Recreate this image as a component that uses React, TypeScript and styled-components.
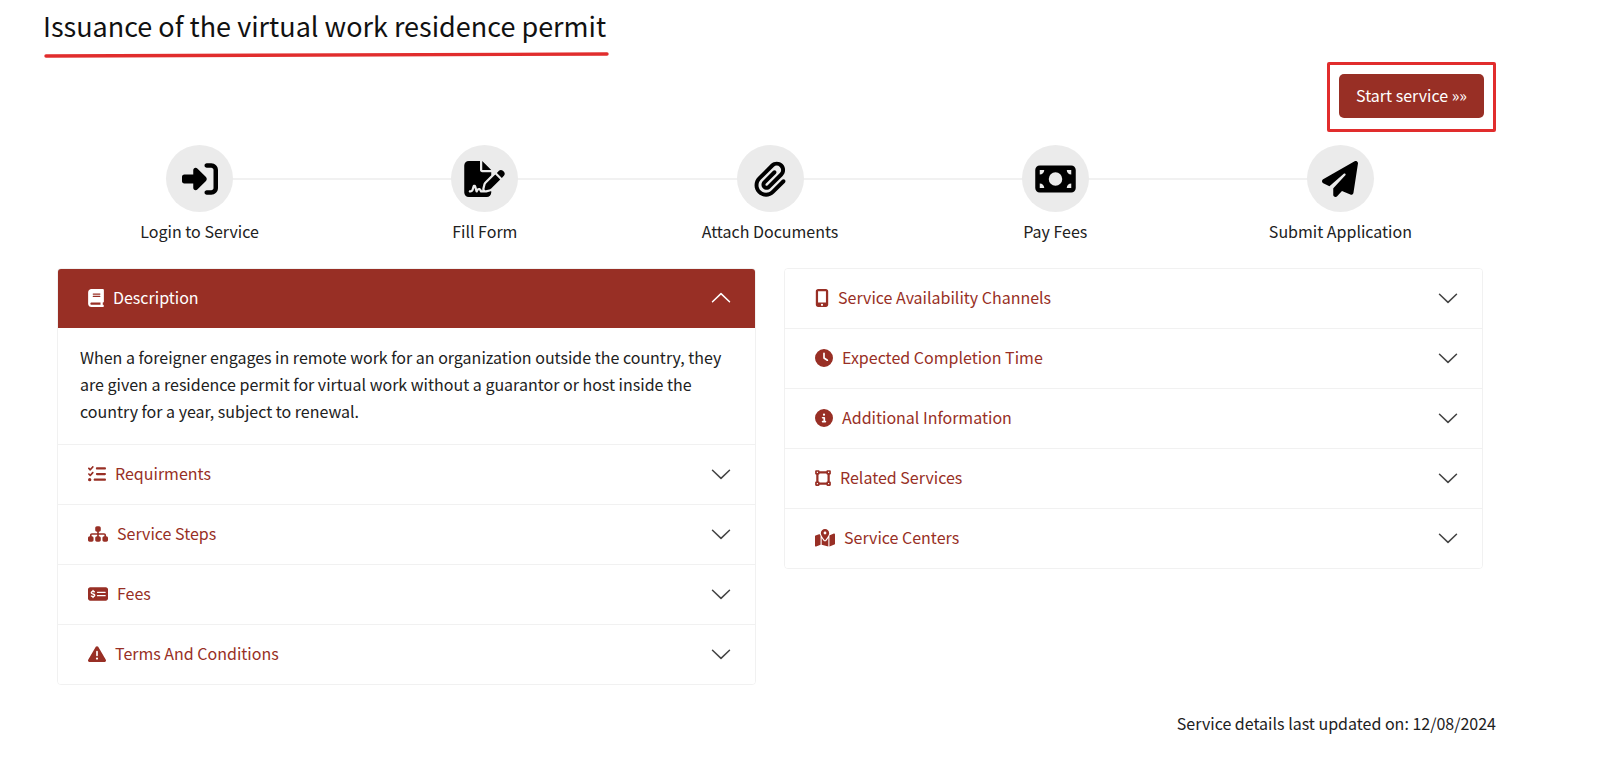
import React, { useState } from 'react';
import styled, { createGlobalStyle } from 'styled-components';
import type { IconType } from 'react-icons';
import {
  FaRightToBracket, FaFileSignature, FaPaperclip, FaMoneyBill, FaPaperPlane, FaBook, FaListCheck,
  FaSitemap, FaMoneyCheckDollar, FaTriangleExclamation, FaMobileScreenButton, FaClock, FaCircleInfo,
  FaVectorSquare, FaMapLocationDot,
} from 'react-icons/fa6';

const brand = '#982f25';
const marker = '#e12d2d';
const line = '#f1f1f1';

const GlobalStyle = createGlobalStyle`
  *, *::before, *::after { box-sizing: border-box; }
  body {
    margin: 0;
    background: #fff;
    color: #212121;
    font: 16px/27px "Noto Sans CJK SC", "Noto Sans", sans-serif;
  }
  button { font: inherit; cursor: pointer; }
`;

const Page = styled.main`
  padding: 6px 104px 16px 43px;
`;

const Title = styled.h1`
  margin: 0;
  font-size: 27px;
  font-weight: 400;
  line-height: 40px;
  color: #111;
`;

const TitleBlock = styled.header`
  width: fit-content;
`;

const Underline = styled.svg`
  display: block;
  width: 100%;
  height: 6px;
  margin-top: 6px;
  overflow: visible;
`;

const Actions = styled.div`
  display: flex;
  justify-content: flex-end;
  margin-top: 4px;
`;

const Highlight = styled.div`
  padding: 9px 9px 11px;
  border: 3px solid ${marker};
  border-radius: 2px;
`;

const StartButton = styled.button`
  display: block;
  height: 44px;
  padding: 0 17px 1px;
  border: 0;
  border-radius: 5px;
  background: ${brand};
  color: #fff;
`;

const Content = styled.div`
  padding: 13px 13px 0 14px;
`;

const Steps = styled.ol`
  display: flex;
  margin: 0;
  padding: 0;
  list-style: none;
`;

const Step = styled.li`
  position: relative;
  flex: 1;
  display: flex;
  flex-direction: column;
  align-items: center;
  gap: 6px;

  &:not(:last-child)::after {
    content: '';
    position: absolute;
    top: 33px;
    left: 50%;
    width: 100%;
    height: 2px;
    background: ${line};
  }
`;

const StepIcon = styled.span`
  position: relative;
  z-index: 1;
  display: grid;
  place-items: center;
  width: 67px;
  height: 67px;
  border-radius: 50%;
  background: #ebebeb;
  color: #000;
`;

const Glyph = styled.span<{ $width: number; $height: number }>`
  display: block;
  flex: none;
  width: ${p => p.$width}px;
  height: ${p => p.$height}px;

  > svg { display: block; width: 100%; height: 100%; }
`;

const Columns = styled.div`
  display: grid;
  grid-template-columns: 1fr 1fr;
  gap: 28px;
  align-items: start;
  margin-top: 23px;
`;

const Accordion = styled.div`
  border: 1px solid ${line};
  border-radius: 4px;
  overflow: hidden;
`;

const Item = styled.section`
  & + & { border-top: 1px solid ${line}; }
`;

const ItemHeading = styled.h2`
  margin: 0;
  font-size: 16px;
  font-weight: 400;
`;

const Toggle = styled.button<{ $open: boolean }>`
  display: flex;
  align-items: center;
  gap: 9px;
  width: 100%;
  height: 59px;
  padding: 0 24px 2px 30px;
  border: 0;
  background: ${p => (p.$open ? brand : '#fff')};
  color: ${p => (p.$open ? '#fff' : brand)};
  text-align: left;
`;

const Chevron = styled.svg<{ $open: boolean }>`
  width: 20px;
  height: 20px;
  margin-left: auto;
  transform: ${p => (p.$open ? 'rotate(180deg)' : 'none')};
  color: ${p => (p.$open ? '#fff' : '#444')};
`;

const Body = styled.p`
  margin: 0;
  padding: 16px 22px 19px;
`;

const Updated = styled.p`
  margin: 25px 0 0;
  text-align: right;
`;

type Entry = { label: string; icon: IconType; width: number; text?: string };

const steps: Entry[] = [
  { label: 'Login to Service', icon: FaRightToBracket, width: 36 },
  { label: 'Fill Form', icon: FaFileSignature, width: 41 },
  { label: 'Attach Documents', icon: FaPaperclip, width: 32 },
  { label: 'Pay Fees', icon: FaMoneyBill, width: 41 },
  { label: 'Submit Application', icon: FaPaperPlane, width: 36 },
];

const left: Entry[] = [
  {
    label: 'Description',
    icon: FaBook,
    width: 16,
    text: 'When a foreigner engages in remote work for an organization outside the country, they are given a residence permit for virtual work without a guarantor or host inside the country for a year, subject to renewal.',
  },
  { label: 'Requirments', icon: FaListCheck, width: 18 },
  { label: 'Service Steps', icon: FaSitemap, width: 20 },
  { label: 'Fees', icon: FaMoneyCheckDollar, width: 20 },
  { label: 'Terms And Conditions', icon: FaTriangleExclamation, width: 18 },
];

const right: Entry[] = [
  { label: 'Service Availability Channels', icon: FaMobileScreenButton, width: 14 },
  { label: 'Expected Completion Time', icon: FaClock, width: 18 },
  { label: 'Additional Information', icon: FaCircleInfo, width: 18 },
  { label: 'Related Services', icon: FaVectorSquare, width: 16 },
  { label: 'Service Centers', icon: FaMapLocationDot, width: 20 },
];

function Panel({ entries, initial }: { entries: Entry[]; initial?: string }) {
  const [open, setOpen] = useState(initial);
  return (
    <Accordion>
      {entries.map(({ label, icon: Icon, width, text }) => {
        const isOpen = open === label;
        return (
          <Item key={label}>
            <ItemHeading>
              <Toggle type="button" $open={isOpen} aria-expanded={isOpen} onClick={() => setOpen(isOpen ? undefined : label)}>
                <Glyph $width={width} $height={18}><Icon aria-hidden /></Glyph>
                {label}
                <Chevron $open={isOpen} viewBox="0 0 16 16" fill="none" stroke="currentColor" strokeWidth="1.2" strokeLinecap="round" strokeLinejoin="round" aria-hidden>
                  <path d="M1.2 5 8 11.5 14.8 5" />
                </Chevron>
              </Toggle>
            </ItemHeading>
            {isOpen && text && <Body>{text}</Body>}
          </Item>
        );
      })}
    </Accordion>
  );
}

export default function App() {
  return (
    <Page>
      <GlobalStyle />
      <TitleBlock>
        <Title>Issuance of the virtual work residence permit</Title>
        <Underline viewBox="0 0 566 6" preserveAspectRatio="none" aria-hidden>
          <path d="M3 4 564 2" stroke={marker} strokeWidth="3.4" strokeLinecap="round" />
        </Underline>
      </TitleBlock>
      <Actions>
        <Highlight>
          <StartButton type="button">Start service »»</StartButton>
        </Highlight>
      </Actions>
      <Content>
        <Steps>
          {steps.map(({ label, icon: Icon, width }) => (
            <Step key={label}>
              <StepIcon>
                <Glyph $width={width} $height={36}><Icon aria-hidden /></Glyph>
              </StepIcon>
              {label}
            </Step>
          ))}
        </Steps>
        <Columns>
          <Panel entries={left} initial="Description" />
          <Panel entries={right} />
        </Columns>
      </Content>
      <Updated>Service details last updated on: 12/08/2024</Updated>
    </Page>
  );
}
